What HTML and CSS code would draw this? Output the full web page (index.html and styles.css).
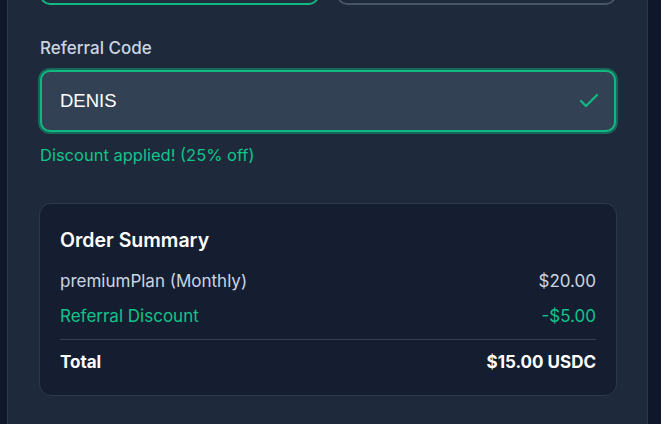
FILE: index.html
```html
<!DOCTYPE html>
<html lang="en">
<head>
<meta charset="utf-8">
<title>Checkout</title>
<link rel="stylesheet" href="styles.css">
</head>
<body>
<div class="panel">
  <div class="plan-options">
    <div class="plan-btn plan-btn-active"></div>
    <div class="plan-btn"></div>
  </div>

  <div class="field">
    <label class="field-label" for="ref">Referral Code</label>
    <div class="input-wrap">
      <input id="ref" class="field-input" type="text" value="DENIS">
      <svg class="check" width="24" height="24" viewBox="0 0 24 24" fill="none" stroke="currentColor" stroke-width="2.3" stroke-linecap="round" stroke-linejoin="round"><path d="M20 6 9 17l-5-5"/></svg>
    </div>
    <p class="field-note">Discount applied! (25% off)</p>
  </div>

  <div class="summary">
    <h3 class="summary-title">Order Summary</h3>
    <div class="summary-row">
      <span>premiumPlan (Monthly)</span>
      <span>$20.00</span>
    </div>
    <div class="summary-row summary-discount">
      <span>Referral Discount</span>
      <span>-$5.00</span>
    </div>
    <div class="summary-row summary-total">
      <span>Total</span>
      <span>$15.00 USDC</span>
    </div>
  </div>
</div>
</body>
</html>
```

FILE: styles.css
```css
html, body {
  margin: 0;
  padding: 0;
  height: 100%;
}

body {
  background: #0f172a;
  font-family: Inter, "Noto Sans", "Liberation Sans", sans-serif;
  overflow: hidden;
}

.panel {
  box-sizing: border-box;
  width: 641px;
  min-height: 100%;
  margin-left: 7px;
  padding: 0 31px 40px 32px;
  background: #1e293b;
  border-left: 1px solid #2d3a4e;
  border-right: 1px solid #2d3a4e;
}

.plan-options {
  display: grid;
  grid-template-columns: 1fr 1fr;
  gap: 18px;
  margin-top: -51px;
}

.plan-btn {
  box-sizing: border-box;
  height: 56px;
  border: 2px solid #475569;
  border-radius: 10px;
  background: #1e293b;
}

.plan-btn-active {
  border-color: #10b981;
  background: #1f2d3c;
}

.field {
  margin-top: 32px;
}

.field-label {
  display: block;
  font-size: 17px;
  line-height: 22px;
  font-weight: 500;
  color: #cbd5e1;
}

.input-wrap {
  position: relative;
  margin-top: 11px;
}

.field-input {
  display: block;
  box-sizing: border-box;
  width: 100%;
  height: 62px;
  margin: 0;
  padding: 0 52px 0 18px;
  background: #334155;
  border: 2px solid #10b981;
  border-radius: 10px;
  box-shadow: 0 0 0 2px rgba(16, 185, 129, 0.45);
  color: #ffffff;
  font-family: "Liberation Sans", Arial, sans-serif;
  font-size: 18.5px;
  outline: none;
}

.check {
  position: absolute;
  right: 15px;
  top: 19px;
  color: #10b981;
}

.field-note {
  margin: 12px 0 0;
  font-size: 16.5px;
  line-height: 22px;
  color: #10c48a;
}

.summary {
  margin: 37px -1px 0;
  padding: 22px 20px 21px;
  background: #151e31;
  border: 1px solid #2d3a4e;
  border-radius: 12px;
}

.summary-title {
  margin: 0 0 15px;
  font-size: 19.5px;
  line-height: 28px;
  font-weight: 600;
  color: #ffffff;
}

.summary-row {
  display: flex;
  justify-content: space-between;
  align-items: center;
  font-size: 17px;
  line-height: 24px;
  color: #cbd5e1;
}

.summary-row + .summary-row {
  margin-top: 11px;
}

.summary-discount {
  color: #10c48a;
}

.summary-row.summary-total {
  margin-top: 11px;
  padding-top: 10px;
  border-top: 1px solid #334155;
  color: #ffffff;
  font-weight: 700;
}
```
